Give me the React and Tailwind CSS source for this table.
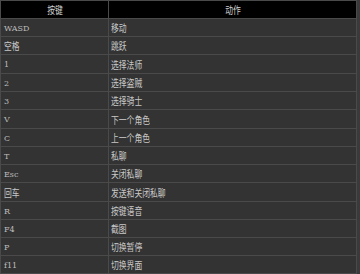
import React from "react";

const rows = [
  ["WASD", "移动", "h-[18px]"],
  ["空格", "跳跃", "h-[18px]"],
  ["1", "选择法师", "h-[19px]"],
  ["2", "选择盗贼", "h-[18px]"],
  ["3", "选择骑士", "h-[18px]"],
  ["V", "下一个角色", "h-[19px]"],
  ["C", "上一个角色", "h-[18px]"],
  ["T", "私聊", "h-[18px]"],
  ["Esc", "关闭私聊", "h-[18px]"],
  ["回车", "发送和关闭私聊", "h-[19px]"],
  ["R", "按键语音", "h-[18px]"],
  ["F4", "截图", "h-[18px]"],
  ["P", "切换暂停", "h-[18px]"],
  ["f11", "切换界面", "h-[18px]"],
];

function Txt({ t }) {
  const ascii = /^[\x00-\x7f]+$/.test(t);
  if (ascii) {
    return (
      <span className="inline-block align-middle text-[8px] leading-none text-[#bdbdbd] [font-family:'DejaVu_Serif','Liberation_Serif',serif]">
        {t}
      </span>
    );
  }
  return (
    <span className="inline-block origin-left scale-x-[0.78] align-middle text-[10px] leading-none whitespace-nowrap text-[#c8c8c8] [font-family:'Noto_Sans_CJK_SC',sans-serif]">
      {t}
    </span>
  );
}

export default function App() {
  return (
    <div className="h-[274px] w-[360px] overflow-hidden bg-[#3a3a3a] text-[10px] leading-[10px]">
      <table className="w-[357px] table-fixed border-collapse border border-[#4a4a4a] bg-[#333333]">
        <colgroup>
          <col className="w-[108px]" />
          <col />
        </colgroup>
        <thead>
          <tr className="h-[18px] bg-black">
            <th className="border border-[#4a4a4a] p-0 text-center align-middle font-normal">
              <span className="inline-block scale-x-[0.78] align-middle text-[10px] leading-none text-[#d0d0d0] [font-family:'Noto_Sans_CJK_SC',sans-serif]">按键</span>
            </th>
            <th className="border border-[#4a4a4a] p-0 text-center align-middle font-normal">
              <span className="inline-block scale-x-[0.78] align-middle text-[10px] leading-none text-[#d0d0d0] [font-family:'Noto_Sans_CJK_SC',sans-serif]">动作</span>
            </th>
          </tr>
        </thead>
        <tbody>
          {rows.map(([k, a, h]) => (
            <tr key={k} className={h}>
              <td className="border border-[#4a4a4a] py-0 pl-[3px] pr-0 align-middle">
                <Txt t={k} />
              </td>
              <td className="border border-[#4a4a4a] py-0 pl-[2px] pr-0 align-middle">
                <Txt t={a} />
              </td>
            </tr>
          ))}
        </tbody>
      </table>
    </div>
  );
}
